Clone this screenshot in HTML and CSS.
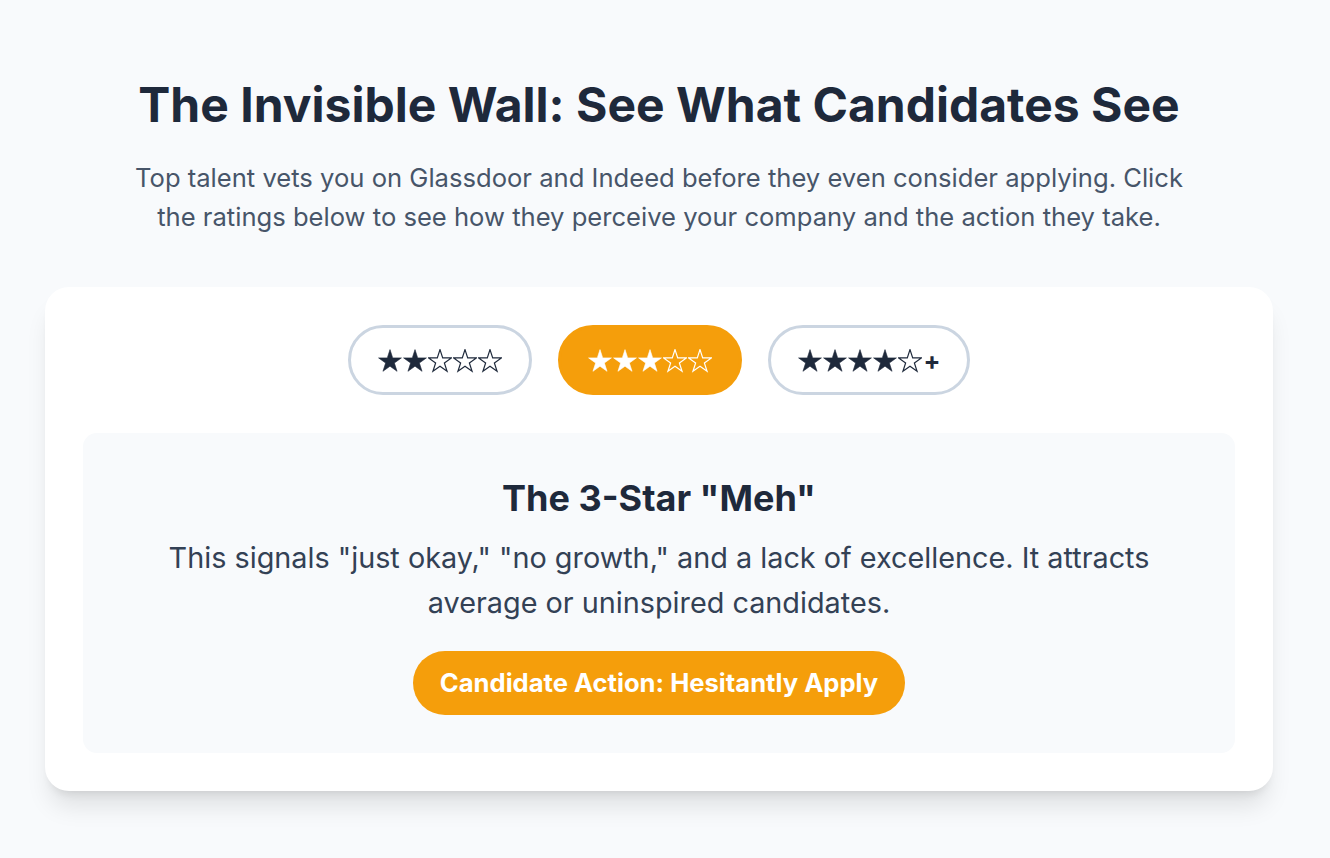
FILE: index.html
```html
<!DOCTYPE html>
<html lang="en">
<head>
<meta charset="utf-8">
<title>The Invisible Wall</title>
<link rel="stylesheet" href="styles.css">
</head>
<body>
<svg width="0" height="0" class="defs" aria-hidden="true">
  <defs>
    <path id="star" d="M12 0.6 L14.7 8.88 L23.41 8.89 L16.37 14.02 L19.05 22.31 L12 17.2 L4.95 22.31 L7.63 14.02 L0.59 8.89 L9.3 8.88 Z"/>
  </defs>
</svg>
<main class="page">
  <header class="intro">
    <h1 class="title">The Invisible Wall: See What Candidates See</h1>
    <p class="lead">Top talent vets you on Glassdoor and Indeed before they even consider applying. Click the ratings below to see how they perceive your company and the action they take.</p>
  </header>
  <section class="card">
    <div class="ratings">
      <button class="rating" aria-label="2 stars">
        <span class="stars">
          <svg class="star full" viewBox="0 0 24 24"><use href="#star"/></svg>
          <svg class="star full" viewBox="0 0 24 24"><use href="#star"/></svg>
          <svg class="star empty" viewBox="0 0 24 24"><use href="#star"/></svg>
          <svg class="star empty" viewBox="0 0 24 24"><use href="#star"/></svg>
          <svg class="star empty" viewBox="0 0 24 24"><use href="#star"/></svg>
        </span>
      </button>
      <button class="rating active" aria-label="3 stars">
        <span class="stars">
          <svg class="star full" viewBox="0 0 24 24"><use href="#star"/></svg>
          <svg class="star full" viewBox="0 0 24 24"><use href="#star"/></svg>
          <svg class="star full" viewBox="0 0 24 24"><use href="#star"/></svg>
          <svg class="star empty" viewBox="0 0 24 24"><use href="#star"/></svg>
          <svg class="star empty" viewBox="0 0 24 24"><use href="#star"/></svg>
        </span>
      </button>
      <button class="rating" aria-label="4 stars and up">
        <span class="stars">
          <svg class="star full" viewBox="0 0 24 24"><use href="#star"/></svg>
          <svg class="star full" viewBox="0 0 24 24"><use href="#star"/></svg>
          <svg class="star full" viewBox="0 0 24 24"><use href="#star"/></svg>
          <svg class="star full" viewBox="0 0 24 24"><use href="#star"/></svg>
          <svg class="star empty" viewBox="0 0 24 24"><use href="#star"/></svg>
        </span><span class="plus">+</span>
      </button>
    </div>
    <div class="panel">
      <h2 class="panel-title">The 3-Star "Meh"</h2>
      <p class="panel-text">This signals "just okay," "no growth," and a lack of excellence. It attracts average or uninspired candidates.</p>
      <div class="action">Candidate Action: Hesitantly Apply</div>
    </div>
  </section>
</main>
</body>
</html>
```
FILE: styles.css
```css
* { box-sizing: border-box; }
html, body { margin: 0; padding: 0; }
html { background: #f8fafc; }
body {
  background: #f8fafc;
  font-family: Inter, "Noto Sans", "DejaVu Sans", sans-serif;
  color: #1e293b;
  padding-right: 12px;
  min-height: 858px;
}
.defs { position: absolute; width: 0; height: 0; overflow: hidden; }
.page {
  max-width: 1228px;
  margin: 0 auto;
  padding: 76px 0 60px;
}
.intro { text-align: center; }
.title {
  margin: 0;
  font-size: 48px;
  line-height: 1.2;
  font-weight: 700;
  color: #1e293b;
}
.lead {
  max-width: 1075px;
  margin: 24px auto 0;
  font-size: 25.6px;
  line-height: 39px;
  color: #475569;
}
.card {
  margin-top: 51px;
  background: #fff;
  border-radius: 24px;
  padding: 38px;
  box-shadow: 0 20px 25px -5px rgba(0,0,0,0.1), 0 8px 10px -6px rgba(0,0,0,0.1);
}
.ratings {
  display: flex;
  justify-content: center;
  gap: 26px;
}
.rating {
  display: flex;
  align-items: center;
  font-family: Inter, sans-serif;
  font-size: 25px;
  line-height: 36px;
  height: 70px;
  padding: 0 27px;
  border: 3px solid #cbd5e1;
  border-radius: 999px;
  background: #fff;
  color: #1e293b;
  font-weight: 700;
  cursor: pointer;
}
.stars {
  display: flex;
  gap: 1px;
  margin-top: 2px;
}
.star {
  width: 24px;
  height: 24px;
  display: block;
}
.star.full { fill: currentColor; stroke: currentColor; stroke-width: 0.6; stroke-linejoin: miter; }
.star.empty { fill: none; stroke: currentColor; stroke-width: 1.2; stroke-linejoin: miter; }
.plus {
  font-size: 25px;
  margin-left: 2px;
  margin-top: 3px;
}
.rating.active {
  background: #f59e0b;
  border-color: #f59e0b;
  color: #fff;
}
.panel {
  margin-top: 38px;
  background: #f8fafc;
  border-radius: 14px;
  padding: 38px;
  text-align: center;
}
.panel-title {
  margin: 0;
  font-size: 36px;
  line-height: 54px;
  font-weight: 700;
  color: #1e293b;
}
.panel-text {
  margin: 10px auto 0;
  font-size: 28.8px;
  line-height: 45px;
  color: #334155;
}
.action {
  display: inline-block;
  margin-top: 26px;
  background: #f59e0b;
  color: #fff;
  font-weight: 700;
  font-size: 25.6px;
  line-height: 36px;
  padding: 14px 27px;
  border-radius: 999px;
}
```
